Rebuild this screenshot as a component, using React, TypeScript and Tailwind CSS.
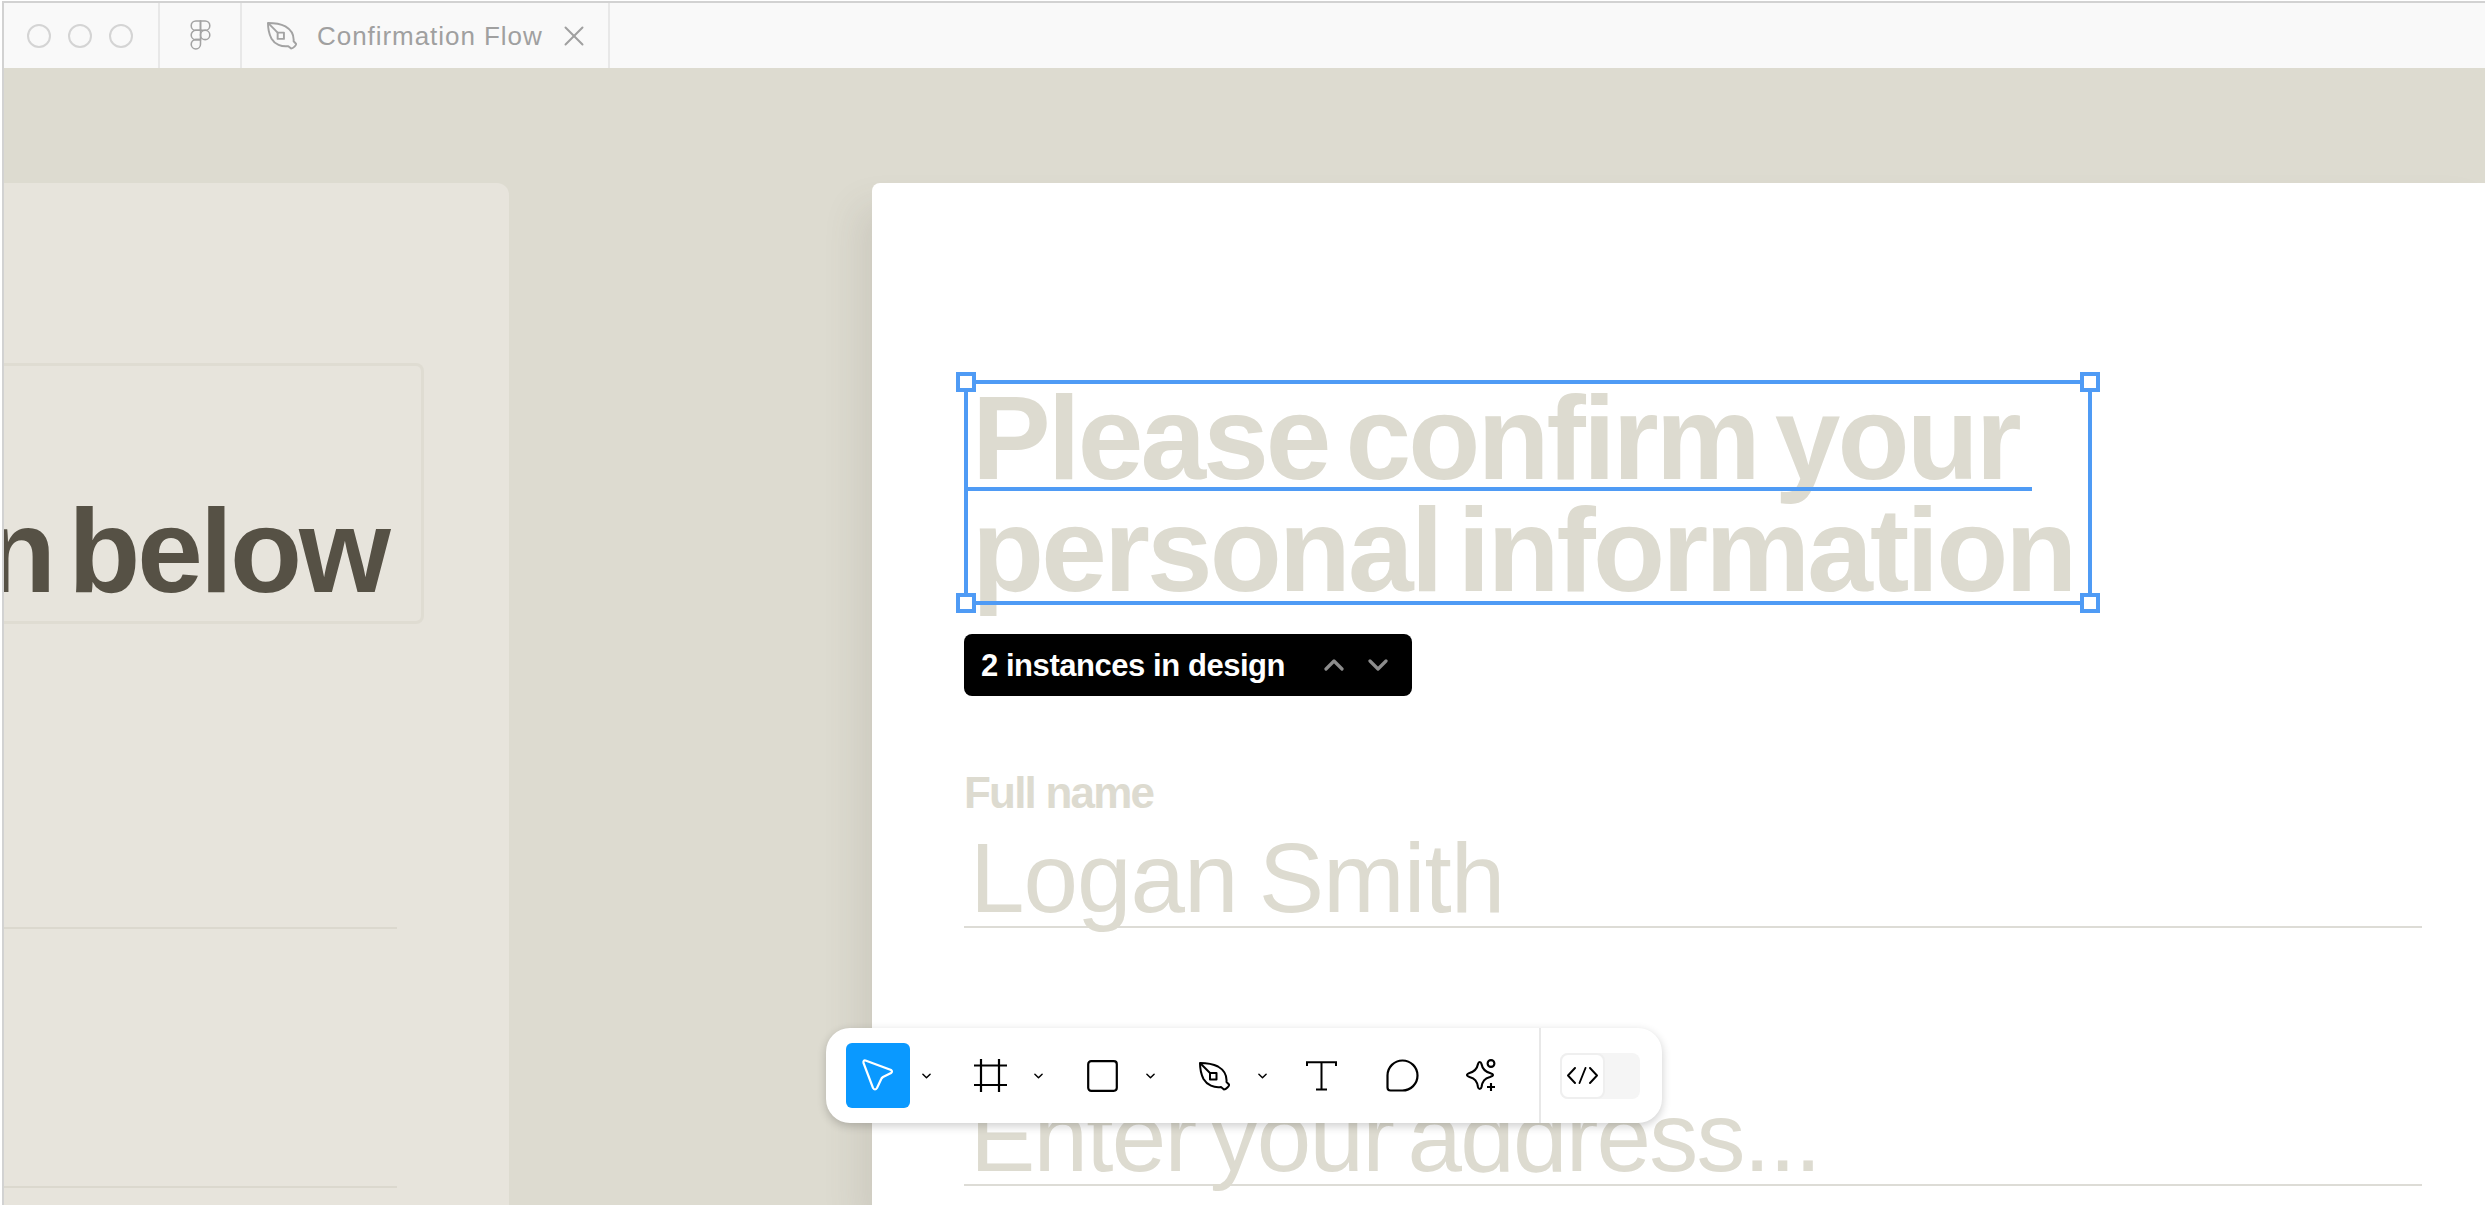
import { ReactNode } from "react";
import { X } from "lucide-react";

const Chevron = ({ up, className }: { up?: boolean; className?: string }) => (
  <svg viewBox="0 0 10 6" fill="none" stroke="currentColor" strokeWidth="1.6" strokeLinecap="round" strokeLinejoin="round" className={className}>
    {up ? <path d="M1 5l4-4 4 4" /> : <path d="M1 1l4 4 4-4" />}
  </svg>
);

const FigmaLogo = () => (
  <svg width="21" height="31" viewBox="0 0 20 30" fill="none" stroke="#a3a3a3" strokeWidth="1.5">
    <path d="M10 1H5.5a4.5 4.5 0 0 0 0 9H10z" />
    <path d="M10 1h4.5a4.5 4.5 0 0 1 0 9H10z" />
    <path d="M10 10H5.5a4.5 4.5 0 0 0 0 9H10z" />
    <circle cx="14.5" cy="14.5" r="4.5" />
    <path d="M5.5 19H10v4.5a4.5 4.5 0 1 1-4.5-4.5z" />
  </svg>
);

const PenIcon = ({ className }: { className?: string }) => (
  <svg viewBox="0 0 31 30" fill="none" stroke="currentColor" strokeWidth="2" strokeLinejoin="round" className={className}>
    <path d="M1 2C7 2 14 3 19 5.5C25 9 28 15 27.5 21L30 23.5C30.5 25 27 28.5 25 28.5L22 26C15 27 8 24 4.5 18C2 13 1 7 1 2Z" />
    <path d="M1 2L11 12" />
    <rect x="11" y="12" width="6.5" height="6.5" />
  </svg>
);

const ToolChevron = () => <Chevron className="w-[9px] h-[6px] text-black" />;

const Tool = ({ children, chevron, className }: { children: ReactNode; chevron?: boolean; className?: string }) => (
  <div className={`flex items-center ${className ?? ""}`}>
    {children}
    {chevron && <ToolChevron />}
  </div>
);

const Toolbar = () => (
  <div className="absolute left-[826px] top-[1028px] w-[836px] h-[95px] bg-white rounded-[24px] shadow-[0_3px_10px_rgba(0,0,0,0.2)] flex items-center pl-[20px]">
    <div className="w-[64px] h-[65px] bg-[#0a99ff] rounded-[6px] flex items-center justify-center">
      <svg width="33" height="33" viewBox="0 0 33 33" fill="none" stroke="#fff" strokeWidth="2.2">
        <path d="M3.5 1.5L29 11Q31 12.5 29 14L21 18Q19.5 19 19 20.5L15 29Q13 32 11 29L1.5 4Q1 1 3.5 1.5Z" />
      </svg>
    </div>
    <Tool chevron className="ml-[12px]">{null}</Tool>
    <Tool className="ml-[43px]">
      <svg width="33" height="33" viewBox="0 0 33 33" fill="none" stroke="#000" strokeWidth="2.2">
        <path d="M7 0V33M25 0V33M0 6.5H33M0 26H33" />
      </svg>
    </Tool>
    <Tool chevron className="ml-[27px]">{null}</Tool>
    <Tool className="ml-[44px]">
      <svg width="31" height="32" viewBox="0 0 31 32" fill="none" stroke="#000" strokeWidth="2.2">
        <rect x="1.2" y="1.2" width="28.6" height="29.6" rx="3" />
      </svg>
    </Tool>
    <Tool chevron className="ml-[28px]">{null}</Tool>
    <Tool className="ml-[44px]">
      <PenIcon className="w-[31px] h-[30px] text-black" />
    </Tool>
    <Tool chevron className="ml-[28px]">{null}</Tool>
    <Tool className="ml-[39px]">
      <svg width="31" height="30" viewBox="0 0 31 30" fill="none" stroke="#000" strokeWidth="2">
        <path d="M1 5V1.2H30V5M15.5 1.2V28.5M10 28.5H21" />
      </svg>
    </Tool>
    <Tool className="ml-[49px]">
      <svg width="33" height="33" viewBox="0 0 33 33" fill="none" stroke="#000" strokeWidth="2.2">
        <path d="M1.5 16.5A15 15 0 1 1 16.5 31.5H4.5Q1.5 31.5 1.5 28.5Z" />
      </svg>
    </Tool>
    <Tool className="ml-[47px]">
      <svg width="32" height="33" viewBox="0 0 32 33" fill="none" stroke="#000" strokeWidth="2.1" strokeLinejoin="round">
        <path d="M13.7 3Q15 3 15.5 5C16.5 10 18.5 12.5 24 14Q27 15 27 16Q27 17 24 18C18.5 19.5 16.5 22 15.5 28Q15 30 13.7 30Q12.5 30 12 28C11 22 9 19.5 3.5 18Q1 17 1 16Q1 15 3.5 14C9 12.5 11 10 12 5Q12.5 3 13.7 3Z" />
        <circle cx="25" cy="4.5" r="3.4" />
        <path d="M25 24V32M21 28H29" />
      </svg>
    </Tool>
    <div className="ml-[41px] self-stretch w-[2px] bg-[#e8e8e8]" />
    <div className="ml-[19px] w-[80px] h-[46px] bg-[#f5f5f5] rounded-[8px]">
      <div className="w-[45px] h-[46px] bg-white border-2 border-[#efefef] rounded-[8px] flex items-center justify-center">
        <svg width="31" height="17" viewBox="0 0 31 17" fill="none" stroke="#000" strokeWidth="1.9" strokeLinecap="round" strokeLinejoin="round">
          <path d="M8 1L1 8.5L8 16M23 1L30 8.5L23 16M18.5 1L12.5 16" />
        </svg>
      </div>
    </div>
  </div>
);

const Handle = ({ className }: { className: string }) => (
  <div className={`absolute w-[20px] h-[20px] bg-white border-[4px] border-[#4f9bf5] ${className}`} />
);

const Heading = () => (
  <div className="relative w-[1128px] h-[225px]">
    <h1 className="pl-[8px] pt-[2px] font-bold text-[118px] leading-[112px] tracking-[-2.9px] [word-spacing:-13px] text-[#dddbd0] whitespace-nowrap">
      Please confirm your
      <br />
      personal information
    </h1>
    <div className="absolute inset-0 border-[4px] border-[#4f9bf5]" />
    <div className="absolute left-0 top-[107px] w-[1068px] h-[4px] bg-[#4f9bf5]" />
    <Handle className="-left-[8px] -top-[8px]" />
    <Handle className="-right-[8px] -top-[8px]" />
    <Handle className="-left-[8px] -bottom-[8px]" />
    <Handle className="-right-[8px] -bottom-[8px]" />
  </div>
);

const InstancesTip = () => (
  <div className="mt-[29px] w-[448px] h-[62px] bg-black rounded-[8px] flex items-center pl-[17px] text-white">
    <span className="pt-[2px] text-[31px] font-bold tracking-[-0.45px] whitespace-nowrap">2 instances in design</span>
    <Chevron up className="ml-auto w-[20px] h-[12px] text-[#8c8c8c]" />
    <Chevron className="ml-[24px] mr-[24px] w-[20px] h-[12px] text-[#8c8c8c]" />
  </div>
);

const LeftPanel = () => (
  <div className="w-[505px] shrink-0 bg-[#e7e4dc] rounded-tr-[12px] pt-[180px] overflow-hidden">
    <div className="w-[420px] h-[261px] border-[3px] border-l-0 border-[#dfdcd2] rounded-r-[8px] flex items-end justify-end pr-[33px] pb-[14px] overflow-hidden">
      <span className="font-bold text-[118px] leading-[112px] tracking-[-2.9px] [word-spacing:-15px] text-[#565145] whitespace-nowrap">information below</span>
    </div>
    <div className="mt-[303px] w-[393px] h-[2px] bg-[#dbd8ce]" />
    <div className="mt-[257px] w-[393px] h-[2px] bg-[#dbd8ce]" />
  </div>
);

const Artboard = () => (
  <div className="ml-[363px] flex-1 bg-white rounded-tl-[8px] pt-[197px] pl-[92px] pr-[63px] shadow-[-14px_24px_36px_rgba(90,85,70,0.12)]">
    <Heading />
    <InstancesTip />
    <div className="mt-[73px] font-bold text-[44px] leading-[48px] tracking-[-1.8px] text-[#dddbd0]">Full name</div>
    <div className="mt-[13px] h-[98px] border-b-2 border-[#dddcd6] pl-[6px] text-[98px] leading-[97px] tracking-[-1px] [word-spacing:-5px] text-[#dddbd0] whitespace-nowrap">Logan Smith</div>
    <div className="mt-[161px] h-[97px] border-b-2 border-[#dddcd6] pl-[6px] text-[98px] leading-[97px] tracking-[-1.8px] [word-spacing:-11px] text-[#dddbd0] whitespace-nowrap">Enter your address...</div>
  </div>
);

export default function App() {
  return (
    <div className="relative w-[2485px] h-[1205px] overflow-hidden bg-white pl-[2px] pt-[1px] font-['Liberation_Sans',Arial,sans-serif]">
      <div className="h-full flex flex-col border-t-2 border-l-2 border-[#d2d2d2]">
        <div className="h-[65px] shrink-0 flex bg-[#f9f9f9] text-[#a0a0a0]">
          <div className="w-[156px] flex items-center gap-[17px] pl-[23px] border-r-2 border-[#e8e8e8]">
            <div className="w-[24px] h-[24px] rounded-full border-2 border-[#d4d4d4]" />
            <div className="w-[24px] h-[24px] rounded-full border-2 border-[#d4d4d4]" />
            <div className="w-[24px] h-[24px] rounded-full border-2 border-[#d4d4d4]" />
          </div>
          <div className="w-[82px] flex items-center justify-center border-r-2 border-[#e8e8e8]">
            <FigmaLogo />
          </div>
          <div className="w-[368px] flex items-center pl-[25px] border-r-2 border-[#e8e8e8]">
            <PenIcon className="w-[30px] h-[29px] text-[#a3a3a3]" />
            <span className="ml-[20px] pt-[2px] text-[26px] tracking-[0.95px] whitespace-nowrap">Confirmation Flow</span>
            <X className="ml-[14px] w-[34px] h-[34px]" strokeWidth={1.4} />
          </div>
        </div>
        <div className="flex-1 flex bg-[#dddbd0] pt-[115px] min-h-0">
          <LeftPanel />
          <Artboard />
        </div>
      </div>
      <Toolbar />
    </div>
  );
}
